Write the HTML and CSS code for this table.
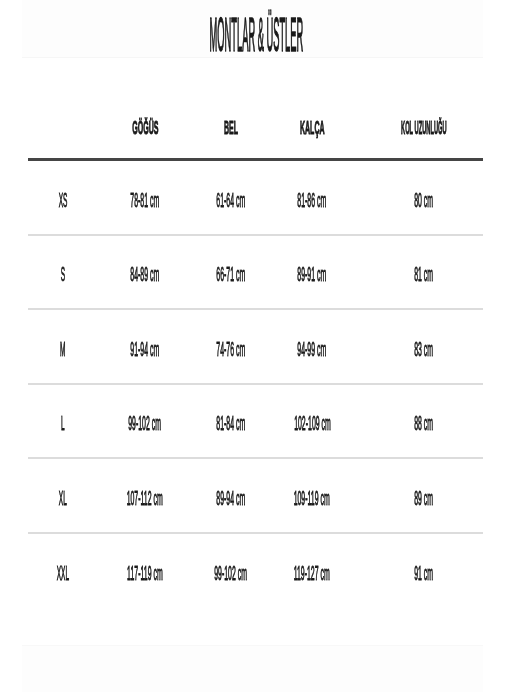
FILE: index.html
```html
<!DOCTYPE html>
<html lang="tr">
<head>
<meta charset="utf-8">
<title>Montlar &amp; Üstler</title>
<link rel="stylesheet" href="styles.css">
</head>
<body>
<div class="page">
  <header class="title-band">
    <h1 class="title"><span class="sq sq-title">MONTLAR &amp; ÜSTLER</span></h1>
  </header>
  <div class="table">
    <div class="row head">
      <div class="cell"></div>
      <div class="cell"><span class="sq sq-head">GÖĞÜS</span></div>
      <div class="cell"><span class="sq sq-head">BEL</span></div>
      <div class="cell"><span class="sq sq-head">KALÇA</span></div>
      <div class="cell last"><span class="sq sq-head sq-long">KOL UZUNLUĞU</span></div>
    </div>
    <div class="row">
      <div class="cell"><span class="sq sq-size">XS</span></div>
      <div class="cell"><span class="sq sq-data">78-81 cm</span></div>
      <div class="cell"><span class="sq sq-data">61-64 cm</span></div>
      <div class="cell"><span class="sq sq-data">81-86 cm</span></div>
      <div class="cell last"><span class="sq sq-data">80 cm</span></div>
    </div>
    <div class="row">
      <div class="cell"><span class="sq sq-size">S</span></div>
      <div class="cell"><span class="sq sq-data">84-89 cm</span></div>
      <div class="cell"><span class="sq sq-data">66-71 cm</span></div>
      <div class="cell"><span class="sq sq-data">89-91 cm</span></div>
      <div class="cell last"><span class="sq sq-data">81 cm</span></div>
    </div>
    <div class="row">
      <div class="cell"><span class="sq sq-size">M</span></div>
      <div class="cell"><span class="sq sq-data">91-94 cm</span></div>
      <div class="cell"><span class="sq sq-data">74-76 cm</span></div>
      <div class="cell"><span class="sq sq-data">94-99 cm</span></div>
      <div class="cell last"><span class="sq sq-data">83 cm</span></div>
    </div>
    <div class="row">
      <div class="cell"><span class="sq sq-size">L</span></div>
      <div class="cell"><span class="sq sq-data">99-102 cm</span></div>
      <div class="cell"><span class="sq sq-data">81-84 cm</span></div>
      <div class="cell"><span class="sq sq-data">102-109 cm</span></div>
      <div class="cell last"><span class="sq sq-data">88 cm</span></div>
    </div>
    <div class="row">
      <div class="cell"><span class="sq sq-size">XL</span></div>
      <div class="cell"><span class="sq sq-data">107-112 cm</span></div>
      <div class="cell"><span class="sq sq-data">89-94 cm</span></div>
      <div class="cell"><span class="sq sq-data">109-119 cm</span></div>
      <div class="cell last"><span class="sq sq-data">89 cm</span></div>
    </div>
    <div class="row final">
      <div class="cell"><span class="sq sq-size">XXL</span></div>
      <div class="cell"><span class="sq sq-data">117-119 cm</span></div>
      <div class="cell"><span class="sq sq-data">99-102 cm</span></div>
      <div class="cell"><span class="sq sq-data">119-127 cm</span></div>
      <div class="cell last"><span class="sq sq-data">91 cm</span></div>
    </div>
  </div>
  <div class="bottom-band"></div>
</div>
</body>
</html>
```

FILE: styles.css
```css
* { box-sizing: border-box; }

html, body {
  margin: 0;
  padding: 0;
  background: #ffffff;
}

body {
  font-family: "Liberation Sans", Arial, sans-serif;
  color: #1a1a1a;
  width: 505px;
  height: 692px;
  overflow: hidden;
}

.page {
  display: flex;
  flex-direction: column;
  height: 692px;
  filter: grayscale(1);
}

.title-band {
  margin: 0 22px;
  height: 58px;
  background: #fdfdfd;
  border-bottom: 1px solid #f6f6f6;
  display: flex;
  justify-content: center;
  align-items: flex-start;
  padding: 10px 0 0 7px;
}

.title {
  margin: 0;
  font-size: 49px;
  line-height: 1;
  font-weight: 400;
}

.sq {
  display: inline-block;
  white-space: nowrap;
  transform-origin: center center;
}

.sq-title {
  transform: scaleX(0.19);
  -webkit-text-stroke: 1.6px #1a1a1a;
}

.table {
  margin: 0 22px 0 28px;
  width: 455px;
}

.row {
  display: grid;
  grid-template-columns: 70px 94px 78px 84px 129px;
  height: 74.5px;
  align-items: center;
  border-bottom: 2px solid #dcdcdc;
  padding-top: 4px;
}

.row.head {
  height: 103px;
  align-items: end;
  padding: 0 0 21px;
  border-bottom: 3px solid #454545;
}

.row.final {
  border-bottom: none;
}

.cell {
  display: flex;
  justify-content: center;
  line-height: 1;
}

.cell.last {
  padding-left: 11px;
}

.sq-head {
  font-size: 19px;
  font-weight: 700;
  transform: scaleX(0.37);
  -webkit-text-stroke: 1px #1a1a1a;
}

.sq-long {
  transform: scaleX(0.3);
}

.sq-data {
  font-size: 21px;
  transform: scaleX(0.33);
  -webkit-text-stroke: 0.9px #1a1a1a;
}

.sq-size {
  font-size: 21px;
  transform: scaleX(0.31);
  -webkit-text-stroke: 0.9px #1a1a1a;
}

.bottom-band {
  margin: auto 22px 0;
  height: 47px;
  background: #fdfdfd;
  border-top: 1px solid #f8f8f8;
}
```
